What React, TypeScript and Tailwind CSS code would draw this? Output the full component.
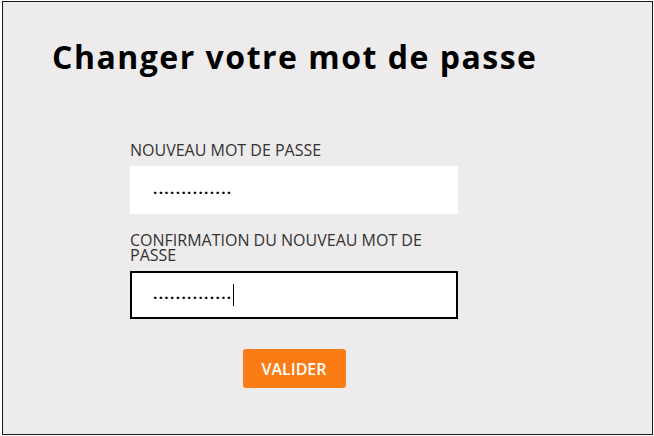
export default function App() {
  return (
    <div className="w-[654px] h-[436px] bg-white pt-px pl-[2px]">
      {/* Frame */}
      <div className="w-[651px] h-[434px] border border-[#1a1a1a] bg-[#edebeb] font-['Open_Sans','Liberation_Sans',sans-serif]">

        {/* Title */}
        <h1 className="pl-[49px] pt-[33px] text-[32px] leading-[44px] font-bold text-black tracking-[1.5px]">
          Changer votre mot de passe
        </h1>

        {/* Form */}
        <div className="ml-[127px] mt-[64px] w-[328px] flex flex-col">

          {/* New password */}
          <label className="text-[16px] leading-[15px] text-[#333] uppercase">Nouveau mot de passe</label>
          <div className="mt-[8px] h-[48px] bg-white flex items-center pl-[23px]">
            <span className="text-[15px] font-bold text-black tracking-[1.4px] leading-none -mt-[4px]">..............</span>
          </div>

          {/* Confirmation */}
          <label className="mt-[19px] text-[16px] leading-[15px] text-[#333] uppercase">Confirmation du nouveau mot de passe</label>
          <div className="mt-[8px] h-[48px] bg-white border-2 border-black flex items-center pl-[21px]">
            <span className="text-[15px] font-bold text-black tracking-[1.4px] leading-none -mt-[4px]">..............</span>
            <span className="w-px h-[22px] bg-black ml-px" />
          </div>

          {/* Submit */}
          <div className="flex justify-center mt-[30px]">
            <button className="w-[103px] h-[39px] rounded-[3px] bg-[#fb7c14] text-white text-[16px] font-semibold uppercase">
              Valider
            </button>
          </div>
        </div>
      </div>
    </div>
  );
}
